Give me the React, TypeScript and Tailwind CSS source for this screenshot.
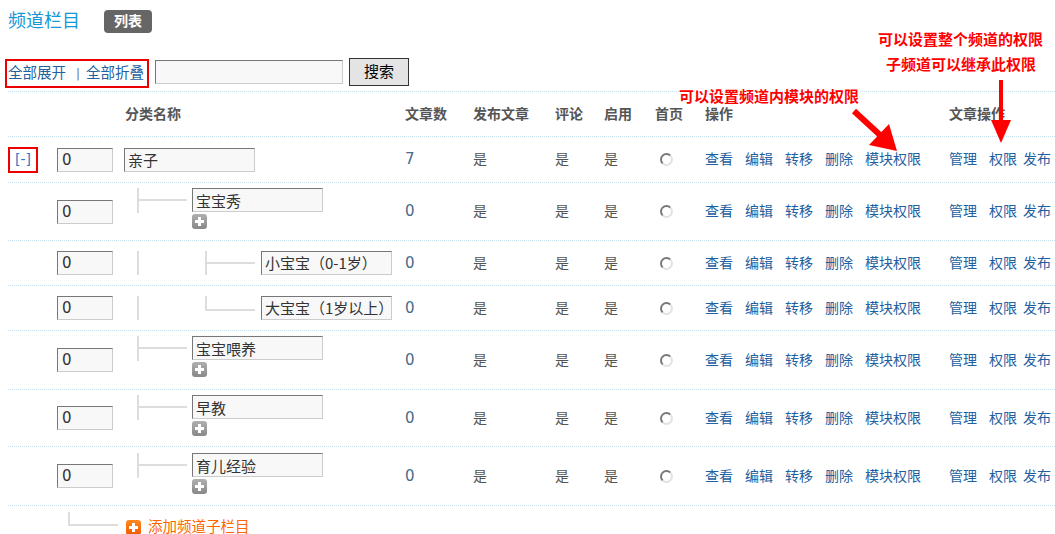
import React from "react";

const cols =
  "grid grid-cols-[49px_67px_281px_68px_82px_49px_51px_50px_244px_106px]";

type Row = {
  name: string;
  level: 0 | 1 | 2;
  last?: boolean;
  count: string;
  h: string;
  pt?: string;
};

const rows: Row[] = [
  { name: "亲子", level: 0, count: "7", h: "h-[46px]" },
  { name: "宝宝秀", level: 1, count: "0", h: "h-[58px]", pt: "pt-[5px]" },
  { name: "小宝宝（0-1岁）", level: 2, count: "0", h: "h-[45px]" },
  { name: "大宝宝（1岁以上）", level: 2, last: true, count: "0", h: "h-[45px]" },
  { name: "宝宝喂养", level: 1, count: "0", h: "h-[59px]", pt: "pt-[5px]" },
  { name: "早教", level: 1, count: "0", h: "h-[57px]", pt: "pt-[5px]" },
  { name: "育儿经验", level: 1, count: "0", h: "h-[59px]", pt: "pt-[6px]" },
];

const boxCls =
  "h-[24px] border border-t-[#777] border-l-[#777] border-r-[#ccc] border-b-[#ccc] bg-[#f8f8f8] text-[#333] outline-none";
const nameCls = `${boxCls} w-[131px] pl-[3px] text-[15px] font-[family-name:'Noto_Sans_CJK_SC',sans-serif]`;
const digitFont = "font-[family-name:'DejaVu_Sans','Noto_Sans_CJK_SC',sans-serif]";

const PlusIcon = ({ orange }: { orange?: boolean }) => (
  <svg width="15" height="15" viewBox="0 0 15 15">
    <defs>
      <linearGradient id={orange ? "go" : "gg"} x1="0" y1="0" x2="0" y2="1">
        <stop offset="0" stopColor={orange ? "#ff8a1e" : "#b0b0b0"} />
        <stop offset="1" stopColor={orange ? "#f05a00" : "#888"} />
      </linearGradient>
    </defs>
    <rect x="0" y="0" width="15" height="15" rx="3" fill={`url(#${orange ? "go" : "gg"})`} />
    <rect x="6" y="3" width="3" height="9" fill="#fff" />
    <rect x="3" y="6" width="9" height="3" fill="#fff" />
  </svg>
);

const Radio = () => (
  <div className="ml-[5px] h-[13px] w-[13px] rounded-full border-2 border-t-[#777] border-l-[#777] border-r-[#e2e2e2] border-b-[#e2e2e2] bg-white" />
);

const NameCell = ({ row }: { row: Row }) => {
  if (row.level === 0) {
    return <input className={nameCls} defaultValue={row.name} />;
  }
  if (row.level === 1) {
    return (
      <div className={`flex items-start self-start pl-[13px] ${row.pt}`}>
        <div className="h-[25px] w-[50px] border-l-2 border-[#ddd]">
          <div className="h-[13px] border-b-2 border-[#ddd]" />
        </div>
        <div className="ml-[5px] flex flex-col">
          <input className={nameCls} defaultValue={row.name} />
          <div className="mt-[2px]">
            <PlusIcon />
          </div>
        </div>
      </div>
    );
  }
  return (
    <div className="flex items-start pl-[13px]">
      <div className="h-[24px] w-[68px] border-l-2 border-[#ddd]" />
      {row.last ? (
        <div className="h-[15px] w-[50px] border-l-2 border-b-2 border-[#ddd]" />
      ) : (
        <div className="h-[24px] w-[50px] border-l-2 border-[#ddd]">
          <div className="h-[13px] border-b-2 border-[#ddd]" />
        </div>
      )}
      <div className="ml-[6px]">
        <input className={nameCls} defaultValue={row.name} />
      </div>
    </div>
  );
};

const Links = () => (
  <>
    <div className="flex gap-[12px] text-[14px] text-[#22609f]">
      <a>查看</a>
      <a>编辑</a>
      <a>转移</a>
      <a>删除</a>
      <a>模块权限</a>
    </div>
    <div className="flex text-[14px] text-[#22609f]">
      <a>管理</a>
      <a className="ml-[12px]">权限</a>
      <a className="ml-[6px]">发布</a>
    </div>
  </>
);

export default function App() {
  return (
    <div className="relative h-[534px] w-[1055px] overflow-hidden bg-white font-[family-name:'Liberation_Sans','Noto_Sans_CJK_SC',sans-serif]">
      {/* title */}
      <div className="flex h-[42px] items-center pl-[8px]">
        <div className="w-[96px] text-[18px] text-[#1697d6]">频道栏目</div>
        <div className="flex h-[23px] w-[48px] items-center justify-center rounded-[4px] bg-[#666] text-[14px] font-bold text-white">
          列表
        </div>
      </div>

      {/* toolbar */}
      <div className="mt-[16px] flex h-[33px] items-start pl-[5px]">
        <div className="mt-[1px] flex h-[29px] w-[144px] items-center border-2 border-[#e00] pl-[1px] text-[14.5px] text-[#22609f]">
          <a>全部展开</a>
          <span className={`ml-[10px] mr-[6px] text-[12px] text-[#777] ${digitFont}`}>|</span>
          <a>全部折叠</a>
        </div>
        <input className="ml-[6px] mt-[2px] h-[24px] w-[188px] border border-t-[#777] border-l-[#777] border-r-[#ccc] border-b-[#ccc] bg-[#f8f8f8] outline-none" />
        <button className="ml-[6px] h-[28px] w-[60px] border border-[#333] bg-[#e4e4e4] text-[15px] text-black">
          搜索
        </button>
      </div>

      {/* table */}
      <div className="ml-[8px]">
        <div
          className={`${cols} h-[45px] items-center border-t border-dotted border-[#c5def0] text-[14px] font-bold text-[#555]`}
        >
          <div />
          <div />
          <div className="pl-[1px]">分类名称</div>
          <div>文章数</div>
          <div>发布文章</div>
          <div>评论</div>
          <div>启用</div>
          <div>首页</div>
          <div>操作</div>
          <div>文章操作</div>
        </div>

        {rows.map((row, i) => (
          <div
            key={i}
            className={`${cols} ${row.h} items-center border-t border-dotted border-[#c5def0] text-[14px] text-[#555]`}
          >
            <div>
              {row.level === 0 && (
                <div
                  className={`flex h-[26px] w-[30px] items-center justify-center border-2 border-[#e00] text-[14px] text-[#2f78c8] ${digitFont}`}
                >
                  [-]
                </div>
              )}
            </div>
            <div>
              <input className={`${boxCls} w-[56px] pl-[4px] text-[15px] ${digitFont}`} defaultValue="0" />
            </div>
            <NameCell row={row} />
            <div className={`text-[15px] text-[#4a6a8c] ${digitFont}`}>{row.count}</div>
            <div>是</div>
            <div>是</div>
            <div>是</div>
            <div>
              <Radio />
            </div>
            <Links />
          </div>
        ))}

        <div className="flex h-[29px] items-start border-t border-dotted border-[#c5def0]">
          <div className="ml-[60px] mt-[6px] h-[14px] w-[50px] border-l-2 border-b-2 border-[#ddd]" />
          <div className="ml-[8px] mt-[11px] flex items-center">
            <PlusIcon orange />
            <span className="ml-[7px] text-[14.5px] text-[#f60]">添加频道子栏目</span>
          </div>
        </div>
      </div>

      {/* annotations */}
      <div className="absolute left-[679px] top-[89px] text-[15px] font-bold leading-[16px] text-[#f00] [text-shadow:0_0_2px_#fff]">
        可以设置频道内模块的权限
      </div>
      <div className="absolute left-[878px] top-[32px] text-[15px] font-bold leading-[16px] text-[#f00] [text-shadow:0_0_2px_#fff]">
        可以设置整个频道的权限
      </div>
      <div className="absolute left-[886px] top-[57px] text-[15px] font-bold leading-[16px] text-[#f00] [text-shadow:0_0_2px_#fff]">
        子频道可以继承此权限
      </div>
      <svg className="pointer-events-none absolute left-0 top-0" width="1055" height="534">
        <line x1="854" y1="111" x2="880" y2="135" stroke="#f00" strokeWidth="6" />
        <polygon points="869,145 889,124 897,151" fill="#f00" />
        <line x1="1001" y1="80" x2="1001" y2="122" stroke="#f00" strokeWidth="4" />
        <polygon points="991,120 1011,120 1001,143" fill="#f00" />
      </svg>
    </div>
  );
}
